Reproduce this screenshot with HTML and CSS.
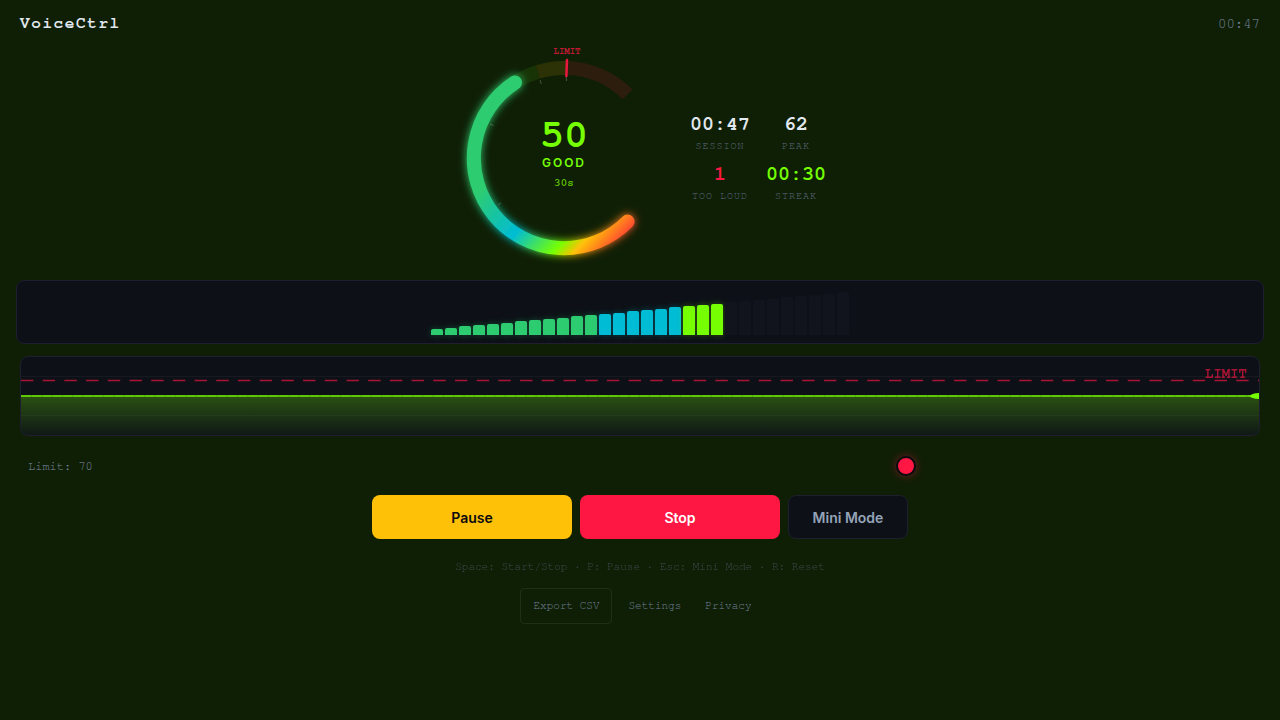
FILE: index.html
```html
<!DOCTYPE html>
<html lang="en">
<head>
<meta charset="utf-8">
<title>VoiceCtrl</title>
<link rel="stylesheet" href="styles.css">
</head>
<body>
<header class="header">
  <h1 class="brand">VoiceCtrl</h1>
  <time class="clock">00:47</time>
</header>
<main class="main">
  <section class="overview">
    <div class="gauge">
      <svg class="gauge-svg" viewBox="0 0 220 220" aria-hidden="true">
        <defs>
          <linearGradient id="level" x1="0" y1="0" x2="1" y2="1">
            <stop offset="0" stop-color="#2ecc71"/>
            <stop offset="0.35" stop-color="#2ecc71"/>
            <stop offset="0.59" stop-color="#00bcd4"/>
            <stop offset="0.77" stop-color="#76ff03"/>
            <stop offset="0.84" stop-color="#ffc107"/>
            <stop offset="1" stop-color="#ff1744"/>
          </linearGradient>
          <filter id="glow" x="-20%" y="-20%" width="140%" height="140%">
            <feGaussianBlur stdDeviation="4" result="blur"/>
            <feMerge><feMergeNode in="blur"/><feMergeNode in="SourceGraphic"/></feMerge>
          </filter>
        </defs>
        <g fill="none" stroke-width="14">
          <path stroke="#183407" d="M61 34.5A90 90 0 0 1 83.700 23.900"/>
          <path stroke="#2c3106" d="M83.700 23.900A90 90 0 0 1 112.700 20"/>
          <path stroke="#2d1d0c" d="M112.700 20A90 90 0 0 1 173.600 46.400"/>
        </g>
        <g stroke="#475544" stroke-width="1">
          <path d="M36 76l3.500 1.500M44 157l3-2.200M86 32l1.300 3.800M112.400 29v4"/>
        </g>
        <path fill="none" stroke="url(#level)" stroke-width="14" stroke-linecap="round" filter="url(#glow)" d="M173.600 173.600A90 90 0 1 1 61 34.500"/>
        <path stroke="#ff1744" stroke-width="2.500" stroke-linecap="round" opacity=".9" d="M113 12L112.400 28"/>
        <text class="gauge-limit" x="113" y="6" text-anchor="middle">LIMIT</text>
      </svg>
      <div class="reading">
        <strong class="reading-value">50</strong>
        <span class="reading-label">GOOD</span>
        <span class="reading-time">30s</span>
      </div>
    </div>
    <dl class="stats">
      <div class="stat"><dt>SESSION</dt><dd>00:47</dd></div>
      <div class="stat"><dt>PEAK</dt><dd>62</dd></div>
      <div class="stat loud"><dt>TOO LOUD</dt><dd>1</dd></div>
      <div class="stat good"><dt>STREAK</dt><dd>00:30</dd></div>
    </dl>
  </section>

  <section class="meter" aria-label="Level meter">
    <i class="bar green" style="height:6px"></i><i class="bar green" style="height:7px"></i><i class="bar green" style="height:9px"></i><i class="bar green" style="height:10px"></i><i class="bar green" style="height:11px"></i><i class="bar green" style="height:12px"></i><i class="bar green" style="height:14px"></i><i class="bar green" style="height:15px"></i><i class="bar green" style="height:16px"></i><i class="bar green" style="height:17px"></i><i class="bar green" style="height:19px"></i><i class="bar green" style="height:20px"></i>
    <i class="bar cyan" style="height:21px"></i><i class="bar cyan" style="height:22px"></i><i class="bar cyan" style="height:24px"></i><i class="bar cyan" style="height:25px"></i><i class="bar cyan" style="height:26px"></i><i class="bar cyan" style="height:28px"></i>
    <i class="bar lime" style="height:29px"></i><i class="bar lime" style="height:30px"></i><i class="bar lime" style="height:31px"></i>
    <i class="bar" style="height:33px"></i><i class="bar" style="height:34px"></i><i class="bar" style="height:35px"></i><i class="bar" style="height:36px"></i><i class="bar" style="height:38px"></i><i class="bar" style="height:39px"></i><i class="bar" style="height:40px"></i><i class="bar" style="height:41px"></i><i class="bar" style="height:43px"></i>
  </section>

  <section class="history" aria-label="Level history">
    <svg class="history-svg" aria-hidden="true">
      <defs>
        <linearGradient id="area" x1="0" y1="0" x2="0" y2="1">
          <stop offset="0" stop-color="#76ff03" stop-opacity=".27"/>
          <stop offset="1" stop-color="#76ff03" stop-opacity=".03"/>
        </linearGradient>
      </defs>
      <rect y="39" width="100%" height="39" fill="url(#area)"/>
      <g stroke="#ffffff" stroke-opacity=".04">
        <line x1="0" y1="19.500" x2="100%" y2="19.500"/>
        <line x1="0" y1="58.500" x2="100%" y2="58.500"/>
      </g>
      <line x1="0" y1="23.500" x2="100%" y2="23.500" stroke="#ff1744" stroke-opacity=".65" stroke-width="1.500" stroke-dasharray="12.400 9.300"/>
      <line x1="0" y1="39" x2="100%" y2="39" stroke="#5fc608" stroke-width="2"/>
      <line x1="10" y1="39" x2="100%" y2="39" stroke="#2f6a06" stroke-opacity=".25" stroke-width="2" stroke-dasharray="1 9.300"/>
      <ellipse cx="100%" cy="39" rx="9" ry="3" fill="#76ff03"/>
    </svg>
    <span class="history-limit">LIMIT</span>
  </section>

  <div class="limit-row">
    <label class="limit-label" for="limit">Limit: 70</label>
    <input class="limit-range" id="limit" type="range" min="0" max="100" value="70">
  </div>

  <div class="actions">
    <button class="btn pause" type="button">Pause</button>
    <button class="btn stop" type="button">Stop</button>
    <button class="btn mini" type="button">Mini Mode</button>
  </div>
  <p class="hints">Space: Start/Stop · P: Pause · Esc: Mini Mode · R: Reset</p>
  <footer class="links">
    <button class="export" type="button">Export CSV</button>
    <a class="link" href="#settings">Settings</a>
    <a class="link" href="#privacy">Privacy</a>
  </footer>
</main>
</body>
</html>
```
FILE: styles.css
```css
* { box-sizing: border-box; }
body {
  margin: 0;
  min-height: 100vh;
  background: #0f1f05;
  color: #e2e8f0;
  font-family: "TeX Gyre Cursor", FreeMono, "Liberation Mono", monospace;
}
.header {
  display: flex;
  align-items: center;
  justify-content: space-between;
  height: 48px;
  padding: 0 20px;
}
.brand { margin: 0; padding-bottom: 4px; font-size: 16px; line-height: 20px; font-weight: 700; letter-spacing: 0.1em; }
.clock { color: #7b8aa1; font-size: 14px; line-height: 16px; }
.main { display: flex; flex-direction: column; }
.overview { display: flex; align-items: center; justify-content: center; gap: 16px; }
.gauge { position: relative; width: 220px; height: 220px; }
.gauge-svg { display: block; width: 100%; height: 100%; overflow: visible; }
.gauge-limit { fill: #ff1744; fill-opacity: 0.75; font-size: 9px; font-weight: 700; }
.reading {
  position: absolute;
  inset: 0;
  display: flex;
  flex-direction: column;
  align-items: center;
  justify-content: center;
  gap: 4px;
  padding-bottom: 16px;
  color: #76ff03;
}
.reading-value { font-size: 40px; line-height: 40px; }
.reading-label { font: 600 12px/16px Inter, sans-serif; letter-spacing: 2px; }
.reading-time { font-size: 11px; line-height: 14px; opacity: 0.7; font-weight: 700; }
.stats { display: grid; grid-template-columns: 60px 60px; gap: 10px 16px; margin: 0; }
.stat { display: flex; flex-direction: column-reverse; align-items: center; gap: 6px; }
.stat dt { color: #5b697d; font-size: 10px; line-height: 14px; letter-spacing: 1px; white-space: nowrap; }
.stat dd { margin: 0; font-size: 20px; line-height: 20px; font-weight: 700; }
.loud dd { color: #ff1744; }
.good dd { color: #76ff03; }
.meter {
  display: flex;
  align-items: flex-end;
  justify-content: center;
  gap: 2px;
  height: 64px;
  margin: 12px 16px 0;
  padding: 8px;
  background: #0d1117;
  border: 1px solid #1e1e2e;
  border-radius: 8px;
}
.bar { width: 12px; border-radius: 2px 2px 0 0; background: #11131d; }
.green { background: #2ecc71; box-shadow: 0 0 6px rgba(46, 204, 113, 0.3); }
.cyan { background: #00bcd4; box-shadow: 0 0 6px rgba(0, 188, 212, 0.3); }
.lime { background: #76ff03; box-shadow: 0 0 6px rgba(118, 255, 3, 0.3); }
.history {
  position: relative;
  height: 80px;
  margin: 12px 20px 0;
  overflow: hidden;
  background: #0d1117;
  border: 1px solid #1e1e2e;
  border-radius: 8px;
}
.history-svg { display: block; width: 100%; height: 100%; }
.history-limit {
  position: absolute;
  top: 8px;
  right: 12px;
  color: #ff1744;
  font-size: 14px;
  line-height: 16px;
  font-weight: 700;
  opacity: 0.65;
}
.limit-row { display: flex; align-items: center; gap: 4px; height: 44px; margin-top: 8px; padding: 0 28px; }
.limit-label { min-width: 80px; color: #7b8aa1; font-size: 12px; line-height: 16px; }
.limit-range { flex: 1; height: 20px; margin: 0; appearance: none; background: transparent; }
.limit-range::-webkit-slider-thumb {
  width: 20px;
  height: 20px;
  appearance: none;
  background: #ff1744;
  border: 2px solid #0a0a0f;
  border-radius: 50%;
  box-shadow: 0 0 8px rgba(255, 23, 68, 0.4);
}
.actions { display: flex; justify-content: center; gap: 8px; margin-top: 7px; }
.btn { height: 44px; padding: 2px 0 0; border: 0; border-radius: 8px; font: 600 14px/20px Inter, sans-serif; }
.pause { width: 200px; background: #ffc107; color: #0a0a0f; }
.stop { width: 200px; background: #ff1744; color: #ffffff; }
.mini { width: 120px; background: #0d1117; border: 1px solid #1e1e2e; color: #94a3b8; }
.hints { margin: 20px 0 0; color: #55647a; font-size: 11px; line-height: 16px; text-align: center; opacity: 0.6; }
.links { display: flex; align-items: center; justify-content: center; gap: 8px; margin-top: 13px; color: #70809a; font-size: 11px; line-height: 12px; }
.export {
  height: 36px;
  padding: 0 12px;
  background: transparent;
  border: 1px solid #202e17;
  border-radius: 4px;
  color: inherit;
  font: inherit;
}
.link { padding: 12px 8px; color: inherit; text-decoration: none; }
```
